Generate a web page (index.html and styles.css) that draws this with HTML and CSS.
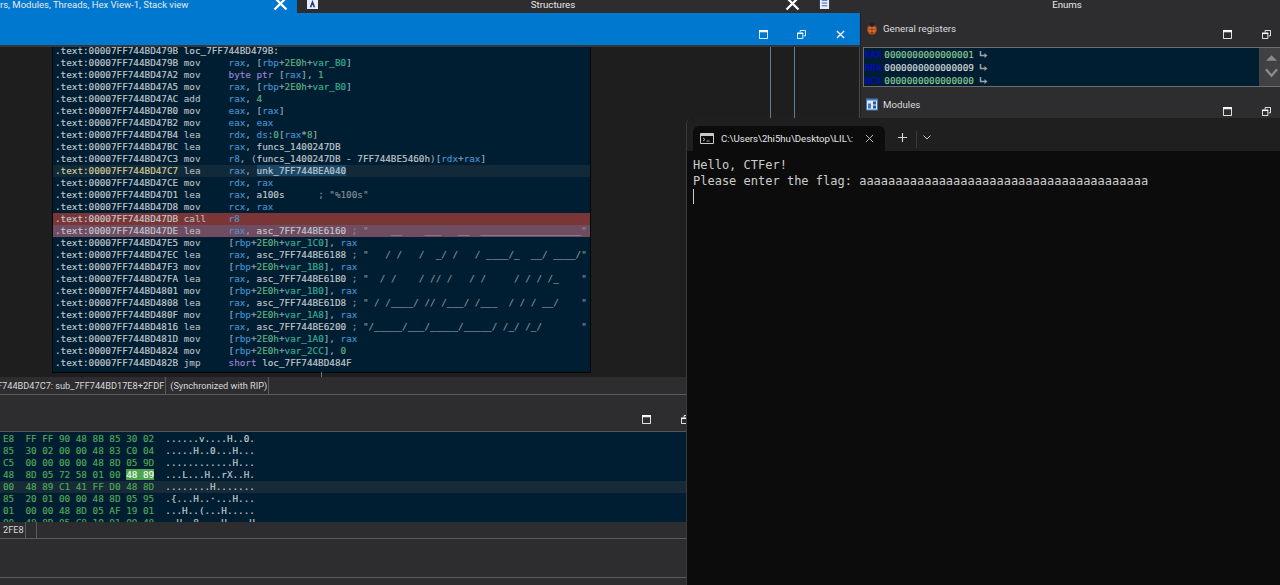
FILE: index.html
```html
<!DOCTYPE html>
<html lang="en">
<head>
    <meta charset="UTF-8">
    <title>IDA debugger and console</title>
    <link rel="stylesheet" href="styles.css">
</head>
<body>

    <svg class="defs" width="0" height="0">
        <symbol id="ic-max" viewBox="0 0 10 10"><path d="M.5.5h9v9h-9z M.5 2h9" fill="none" stroke="#fff" stroke-width="1"/><path d="M0 0h10v2H0z" fill="#fff"/></symbol>
        <symbol id="ic-restore" viewBox="0 0 10 10"><path d="M3.5 2.5v-2h6v6h-2" fill="none" stroke="#fff"/><path d="M.5 3.5h6v6h-6z" fill="none" stroke="#fff"/><path d="M0 3h7v1.5H0z" fill="#fff"/></symbol>
        <symbol id="ic-close" viewBox="0 0 10 10"><path d="M1 1l8 8M9 1l-8 8" fill="none" stroke="#fff" stroke-width="1.5"/></symbol>
        <symbol id="ic-bug" viewBox="0 0 12 13">
            <path d="M1 4L3 5M11 4L9 5M0 7h2M12 7h-2M1 11l2-1M11 11l-2-1" stroke="#3a2a20" fill="none"/>
            <ellipse cx="6" cy="7.5" rx="4.8" ry="5.2" fill="#b8521f"/>
            <path d="M6 3v9.5" stroke="#4a2410"/>
            <path d="M3 6h6M2.500 9h7" stroke="#d98a3c"/>
            <ellipse cx="6" cy="2.5" rx="3" ry="2" fill="#2c2320"/>
        </symbol>
        <symbol id="ic-arrow" viewBox="0 0 9 8">
            <path d="M1.500 0v4.500H6" fill="none" stroke="#9a9fa2" stroke-width="1.500"/>
            <path d="M5.500 2l3 2.500-3 2.500z" fill="#9a9fa2"/>
        </symbol>
    </svg>

    <div class="tabs">
        <div class="tab tab-active">
            <span class="tab-title">rs, Modules, Threads, Hex View-1, Stack view</span>
            <svg class="tab-x"><use href="#ic-close"/></svg>
        </div>
        <div class="tab tab-dark">
            <svg class="tab-icon" viewBox="0 0 12 12"><path d="M0 0h12v12H0z" fill="#e8eef8"/><path d="M6 2L3 10h2l.5-2h1l.5 2h2z" fill="#1f3f8f"/></svg>
            <span class="tab-label">Structures</span>
            <svg class="tab-x"><use href="#ic-close"/></svg>
        </div>
        <div class="tab tab-dark">
            <svg class="tab-icon" viewBox="0 0 12 12"><path d="M1 0h10v12H1z" fill="#e8eef8"/><path d="M3 2.500h6M3 5.500h6M3 8.500h6" stroke="#2a56a8"/></svg>
            <span class="tab-label">Enums</span>
            <span></span>
        </div>
    </div>

    <div class="workspace">
        <div class="left">
            <div class="blue-bar">
                <div class="win-btns">
                    <svg><use href="#ic-max"/></svg>
                    <svg><use href="#ic-restore"/></svg>
                    <svg><use href="#ic-close"/></svg>
                </div>
            </div>

            <div class="graph">
                <div class="edge edge-a"></div>
                <div class="edge edge-b"></div>
                <div class="edge edge-c"></div>
                <div class="node">
<div class="row"><i class="a">.text:00007FF744BD479B</i> <i class="s">loc_7FF744BD479B:</i></div>
<div class="row"><i class="a">.text:00007FF744BD479B</i> <i class="m">mov     </i><i class="r">rax</i><i class="p">, [</i><i class="r">rbp</i><i class="p">+</i><i class="n">2E0h</i><i class="p">+</i><i class="v">var_B0</i><i class="p">]</i></div>
<div class="row"><i class="a">.text:00007FF744BD47A2</i> <i class="m">mov     </i><i class="k">byte ptr</i><i class="p"> [</i><i class="r">rax</i><i class="p">], </i><i class="n">1</i></div>
<div class="row"><i class="a">.text:00007FF744BD47A5</i> <i class="m">mov     </i><i class="r">rax</i><i class="p">, [</i><i class="r">rbp</i><i class="p">+</i><i class="n">2E0h</i><i class="p">+</i><i class="v">var_B0</i><i class="p">]</i></div>
<div class="row"><i class="a">.text:00007FF744BD47AC</i> <i class="m">add     </i><i class="r">rax</i><i class="p">, </i><i class="n">4</i></div>
<div class="row"><i class="a">.text:00007FF744BD47B0</i> <i class="m">mov     </i><i class="r">eax</i><i class="p">, [</i><i class="r">rax</i><i class="p">]</i></div>
<div class="row"><i class="a">.text:00007FF744BD47B2</i> <i class="m">mov     </i><i class="r">eax</i><i class="p">, </i><i class="r">eax</i></div>
<div class="row"><i class="a">.text:00007FF744BD47B4</i> <i class="m">lea     </i><i class="r">rdx</i><i class="p">, </i><i class="r">ds</i><i class="p">:</i><i class="n">0</i><i class="p">[</i><i class="r">rax</i><i class="p">*</i><i class="n">8</i><i class="p">]</i></div>
<div class="row"><i class="a">.text:00007FF744BD47BC</i> <i class="m">lea     </i><i class="r">rax</i><i class="p">, </i><i class="s">funcs_1400247DB</i></div>
<div class="row"><i class="a">.text:00007FF744BD47C3</i> <i class="m">mov     </i><i class="r">r8</i><i class="p">, (</i><i class="s">funcs_1400247DB - 7FF744BE5460h</i><i class="p">)[</i><i class="r">rdx</i><i class="p">+</i><i class="r">rax</i><i class="p">]</i></div>
<div class="row row-cur"><i class="a a-cur">.text:00007FF744BD47C7</i> <i class="m">lea     </i><i class="r">rax</i><i class="p">, </i><i class="s sel">unk_7FF744BEA040</i></div>
<div class="row"><i class="a">.text:00007FF744BD47CE</i> <i class="m">mov     </i><i class="r">rdx</i><i class="p">, </i><i class="r">rax</i></div>
<div class="row"><i class="a">.text:00007FF744BD47D1</i> <i class="m">lea     </i><i class="r">rax</i><i class="p">, </i><i class="s">a100s</i>      <i class="c">; "%100s"</i></div>
<div class="row"><i class="a">.text:00007FF744BD47D8</i> <i class="m">mov     </i><i class="r">rcx</i><i class="p">, </i><i class="r">rax</i></div>
<div class="row row-bp"><i class="a">.text:00007FF744BD47DB</i> <i class="m">call    </i><i class="r">r8</i></div>
<div class="row row-next"><i class="a">.text:00007FF744BD47DE</i> <i class="m">lea     </i><i class="r">rax</i><i class="p">, </i><i class="s">asc_7FF744BE6160</i> <i class="c">; "    __    ___   __  __________________"</i></div>
<div class="row"><i class="a">.text:00007FF744BD47E5</i> <i class="m">mov     </i><i class="p">[</i><i class="r">rbp</i><i class="p">+</i><i class="n">2E0h</i><i class="p">+</i><i class="v">var_1C0</i><i class="p">], </i><i class="r">rax</i></div>
<div class="row"><i class="a">.text:00007FF744BD47EC</i> <i class="m">lea     </i><i class="r">rax</i><i class="p">, </i><i class="s">asc_7FF744BE6188</i> <i class="c">; "   / /   /  _/ /   / ____/_  __/ ____/"</i></div>
<div class="row"><i class="a">.text:00007FF744BD47F3</i> <i class="m">mov     </i><i class="p">[</i><i class="r">rbp</i><i class="p">+</i><i class="n">2E0h</i><i class="p">+</i><i class="v">var_1B8</i><i class="p">], </i><i class="r">rax</i></div>
<div class="row"><i class="a">.text:00007FF744BD47FA</i> <i class="m">lea     </i><i class="r">rax</i><i class="p">, </i><i class="s">asc_7FF744BE61B0</i> <i class="c">; "  / /    / // /   / /     / / / /_    "</i></div>
<div class="row"><i class="a">.text:00007FF744BD4801</i> <i class="m">mov     </i><i class="p">[</i><i class="r">rbp</i><i class="p">+</i><i class="n">2E0h</i><i class="p">+</i><i class="v">var_1B0</i><i class="p">], </i><i class="r">rax</i></div>
<div class="row"><i class="a">.text:00007FF744BD4808</i> <i class="m">lea     </i><i class="r">rax</i><i class="p">, </i><i class="s">asc_7FF744BE61D8</i> <i class="c">; " / /____/ // /___/ /___  / / / __/    "</i></div>
<div class="row"><i class="a">.text:00007FF744BD480F</i> <i class="m">mov     </i><i class="p">[</i><i class="r">rbp</i><i class="p">+</i><i class="n">2E0h</i><i class="p">+</i><i class="v">var_1A8</i><i class="p">], </i><i class="r">rax</i></div>
<div class="row"><i class="a">.text:00007FF744BD4816</i> <i class="m">lea     </i><i class="r">rax</i><i class="p">, </i><i class="s">asc_7FF744BE6200</i> <i class="c">; "/_____/___/_____/_____/ /_/ /_/       "</i></div>
<div class="row"><i class="a">.text:00007FF744BD481D</i> <i class="m">mov     </i><i class="p">[</i><i class="r">rbp</i><i class="p">+</i><i class="n">2E0h</i><i class="p">+</i><i class="v">var_1A0</i><i class="p">], </i><i class="r">rax</i></div>
<div class="row"><i class="a">.text:00007FF744BD4824</i> <i class="m">mov     </i><i class="p">[</i><i class="r">rbp</i><i class="p">+</i><i class="n">2E0h</i><i class="p">+</i><i class="v">var_2CC</i><i class="p">], </i><i class="n">0</i></div>
<div class="row"><i class="a">.text:00007FF744BD482B</i> <i class="m">jmp     </i><i class="k">short</i> <i class="s">loc_7FF744BD484F</i></div>
                </div>
            </div>

            <div class="status status-top">
                <span class="status-cell">F744BD47C7: sub_7FF744BD17E8+2FDF</span>
                <span class="status-cell">(Synchronized with RIP)</span>
            </div>

            <div class="hex-title">
                <div class="win-btns win-btns-hex">
                    <svg><use href="#ic-max"/></svg>
                    <svg><use href="#ic-restore"/></svg>
                </div>
            </div>

            <div class="hex">
<div class="hex-row">E8  FF FF 90 48 8B 85 30 02  <b>......v....H..0.</b></div>
<div class="hex-row">85  30 02 00 00 48 83 C0 04  <b>.....H..0...H...</b></div>
<div class="hex-row">C5  00 00 00 00 48 8D 05 9D  <b>............H...</b></div>
<div class="hex-row">48  8D 05 72 58 01 00 <em>48 89</em>  <b>...L...H..rX..H.</b></div>
<div class="hex-row hex-cur">00  48 89 C1 41 FF D0 48 8D  <b>........H.......</b></div>
<div class="hex-row">85  20 01 00 00 48 8D 05 95  <b>.{...H..·...H...</b></div>
<div class="hex-row">01  00 00 48 8D 05 AF 19 01  <b>...H..(...H.....</b></div>
<div class="hex-row">00  48 8D 05 C8 19 01 00 48  <b>..H..8....H....H</b></div>
            </div>

            <div class="status status-hex">
                <span class="status-cell">2FE8</span>
                <span class="status-cell status-empty"></span>
            </div>
            <div class="empty-panel"></div>
        </div>

        <div class="right">
            <div class="pane-head">
                <svg class="pane-icon"><use href="#ic-bug"/></svg>
                <span class="pane-title">General registers</span>
                <div class="win-btns win-btns-side">
                    <svg><use href="#ic-max"/></svg>
                    <svg><use href="#ic-restore"/></svg>
                </div>
            </div>
            <div class="regs">
                <div class="reg-list">
                    <div class="reg"><span class="reg-name">RAX</span><span class="reg-val reg-chg">0000000000000001</span><svg class="reg-arrow"><use href="#ic-arrow"/></svg></div>
                    <div class="reg"><span class="reg-name">RBX</span><span class="reg-val">0000000000000009</span><svg class="reg-arrow"><use href="#ic-arrow"/></svg></div>
                    <div class="reg"><span class="reg-name">RCX</span><span class="reg-val reg-chg">0000000000000000</span><svg class="reg-arrow"><use href="#ic-arrow"/></svg></div>
                </div>
                <div class="reg-scroll">
                    <svg viewBox="0 0 14 6"><path d="M1 6L7 0l6 6z" fill="#8a8a8a"/></svg>
                    <svg class="reg-down" viewBox="0 0 14 10"><path d="M1 1l6 7 6-7" fill="none" stroke="#8a8a8a" stroke-width="2.500"/></svg>
                </div>
            </div>
            <div class="pane-head pane-head-mod">
                <svg class="pane-icon" viewBox="0 0 12 12"><path d="M0 0h12v12H0z" fill="#3f78c8"/><path d="M1 2h10v9H1z" fill="#dfe9f6"/><path d="M2 5h3v5H2z" fill="#3f78c8"/><path d="M7 3h3v3H7zM7 7h3v3H7z" fill="#2a56a8"/></svg>
                <span class="pane-title">Modules</span>
                <div class="win-btns win-btns-side">
                    <svg><use href="#ic-max"/></svg>
                    <svg><use href="#ic-restore"/></svg>
                </div>
            </div>
        </div>
    </div>

    <!-- console window sits on top of the debugger -->
    <div class="term">
        <div class="term-bar">
            <div class="term-tab">
                <svg class="term-icon" viewBox="0 0 14 11"><path d="M.5.5h13v10H.5z" fill="none" stroke="#c8c8c8"/><path d="M1 1h12v2H1z" fill="#c8c8c8"/><path d="M3 5l2 1.500-2 1.500M6.500 8h3" fill="none" stroke="#c8c8c8" stroke-width=".8"/></svg>
                <span class="term-title">C:\Users\2hi5hu\Desktop\LIL\:</span>
                <svg class="term-x" viewBox="0 0 10 10"><path d="M1 1l8 8M9 1l-8 8" fill="none" stroke="#d0d0d0"/></svg>
            </div>
            <svg class="term-plus" viewBox="0 0 12 12"><path d="M6 1v10M1 6h10" fill="none" stroke="#d8d8d8" stroke-width="1.200"/></svg>
            <div class="term-sep"></div>
            <svg class="term-chev" viewBox="0 0 8 5"><path d="M.5.5L4 4 7.500.5" fill="none" stroke="#c8c8c8"/></svg>
        </div>
        <div class="term-body">
            <div class="term-line">Hello, CTFer!</div>
            <div class="term-line">Please enter the flag: aaaaaaaaaaaaaaaaaaaaaaaaaaaaaaaaaaaaaaaa</div>
            <div class="cursor"></div>
        </div>
    </div>

</body>
</html>
```

FILE: styles.css
```css
body {
    margin: 0;
    width: 1280px;
    height: 585px;
    overflow: hidden;
    position: relative;
    background-color: #2d2d2f;
    color: #d8d8d8;
    font-family: Roboto, "Noto Sans", sans-serif;
    font-size: 9.7px;
}
.defs {
    position: absolute;
}
i, em, b {
    font-style: normal;
    font-weight: normal;
}

/* top tab strip */
.tabs {
    display: flex;
    height: 13px;
    overflow: hidden;
    width: 1325px;
}
.tab {
    display: grid;
    grid-template-columns: 1fr auto 1fr;
    grid-template-rows: 13px;
    align-items: center;
    height: 13px;
    color: #e8e8e8;
    line-height: 9px;
}
.tab-active {
    width: 297px;
    display: flex;
    justify-content: space-between;
    background-color: #0078d0;
    font-size: 9.5px;
}
.tab-title {
    margin-top: -4px;
    white-space: nowrap;
}
.tab-dark {
    width: 512px;
    background-color: #2d2d2f;
}
.tab-dark:last-child {
    width: 516px;
}
.tab-label {
    margin-top: -4px;
}
.tab-icon {
    width: 11px;
    height: 11px;
    margin: -7px 0 0 10px;
}
.tab-x {
    width: 15px;
    height: 15px;
    margin: -7px 9px 0 0;
    justify-self: end;
}

.workspace {
    display: flex;
    height: 572px;
}
.left {
    width: 860px;
    flex-shrink: 0;
}
.right {
    flex: 1;
    border-left: 1px solid #1e1e1e;
}

/* window buttons */
.win-btns {
    display: flex;
    gap: 29.5px;
    margin-left: auto;
}
.win-btns svg {
    width: 9px;
    height: 9px;
    display: block;
}
.blue-bar {
    height: 32px;
    background-color: #0078d0;
    border-bottom: 2px solid #33363a;
    display: flex;
    align-items: flex-end;
    padding-right: 15.5px;
}
.blue-bar .win-btns {
    margin-bottom: 6.5px;
}

/* graph view */
.graph {
    height: 330px;
    position: relative;
    overflow: hidden;
    background-color: #1e1e1e;
    box-sizing: border-box;
    border-right: 1px solid #4a4a4a;
}
.edge {
    position: absolute;
    width: 1px;
    background-color: #5b7f98;
}
.edge-a {
    left: 770px;
    top: 0;
    height: 100%;
}
.edge-b {
    left: 794px;
    top: 0;
    height: 100%;
}
.edge-c {
    left: 321px;
    top: 325px;
    height: 5px;
}
.node {
    margin: -2px 0 0 53px;
    width: 537px;
    height: 327px;
    background-color: #001e32;
    box-shadow: 0 0 0 1px #050505;
    font-family: "DejaVu Sans Mono", monospace;
    font-size: 9.3px;
    line-height: 12px;
    -webkit-text-stroke: 0.15px;
}
.row {
    height: 12px;
    padding-left: 2px;
    white-space: pre;
    overflow: hidden;
}
.row-cur {
    background-color: #12293a;
}
.row-bp {
    background-color: #7a3636;
}
.row-next {
    background-color: #704c62;
}
.sel {
    background-color: #1c4868;
}
.a { color: #c0c7cb; }
.a-cur { color: #d4cb95; }
.m { color: #b0b8bc; }
.r { color: #4590ca; }
.p { color: #93aabd; }
.n { color: #5fb582; }
.v { color: #33b295; }
.k { color: #9f82d2; }
.s { color: #c0c7cb; }
.c { color: #858f95; }
.row-bp .r, .row-next .r { color: #4a93cc; }

/* status bars */
.status {
    display: flex;
    height: 17px;
    line-height: 17px;
    font-size: 9.2px;
    color: #d8d8d8;
    box-sizing: border-box;
}
.status-top {
    height: 18px;
    border-bottom: 1px solid #5c5c5c;
}
.status-top .status-cell:first-child {
    margin-left: -3px;
}
.status-cell {
    padding-right: 1px;
    margin-right: 4px;
    border-right: 1px solid #5c5c5c;
    white-space: nowrap;
}
.status-empty {
    width: 0;
    margin-left: 5px;
}
.status-hex {
    height: 17px;
    border-bottom: 1px solid #5c5c5c;
    line-height: 15px;
}
.status-hex .status-cell:first-child {
    margin-left: 3px;
}

.hex-title {
    height: 37px;
    box-sizing: border-box;
    border-bottom: 1px solid #565656;
    display: flex;
    align-items: flex-end;
    padding: 0 170.5px 7.5px 0;
}
.hex {
    height: 90px;
    overflow: hidden;
    background-color: #001e32;
    font-family: "DejaVu Sans Mono", monospace;
    font-size: 9.3px;
    line-height: 12px;
    padding-left: 3px;
    color: #52a856;
    -webkit-text-stroke: 0.15px;
}
.hex-row {
    height: 12px;
    margin-left: -3px;
    padding-left: 3px;
    white-space: pre;
}
.hex-row:first-child {
    margin-top: 1px;
}
.hex-row b {
    color: #c0cacc;
}
.hex-row em {
    background-color: #4ea44e;
    color: #eef8ee;
}
.hex-cur {
    background-color: #162a38;
}
.empty-panel {
    height: 38px;
    border-bottom: 1px solid #5c5c5c;
}

/* right side panes */
.pane-head {
    display: flex;
    align-items: center;
    height: 34px;
    padding-left: 5px;
    padding-right: 9.5px;
}
.pane-icon {
    width: 12px;
    height: 13px;
    margin: -3px 5px 0 0;
}
.pane-title {
    color: #dcdcdc;
    margin-top: -3px;
}
.win-btns-side {
    margin-top: 8px;
}
.pane-head-mod {
    height: 38px;
}
.pane-head-mod .win-btns-side {
    margin-top: 10px;
}
.regs {
    display: flex;
    height: 40px;
    margin-left: 2px;
    box-sizing: border-box;
    border: 1px solid #6e6e6e;
    border-right: 0;
}
.reg-list {
    width: 395px;
    background-color: #001e32;
    padding-top: 1px;
    overflow: hidden;
    font-family: "DejaVu Sans Mono", monospace;
    font-size: 9.3px;
    line-height: 12.8px;
    color: #d6dcdc;
    -webkit-text-stroke: 0.15px;
}
.reg {
    white-space: pre;
    padding-left: 1px;
}
.reg-name {
    color: #0606d8;
}
.reg-val {
    margin-left: 2.5px;
}
.reg-chg {
    color: #8ccc92;
}
.reg-arrow {
    width: 9px;
    height: 8px;
    margin-left: 5px;
    vertical-align: -1px;
}
.reg-scroll {
    flex: 1;
    background-color: #414143;
    display: flex;
    flex-direction: column;
    align-items: center;
    gap: 7px;
    padding: 7px 0 0 4px;
}
.reg-scroll svg {
    width: 13px;
    height: 6px;
}
.reg-scroll .reg-down {
    height: 10px;
}

/* console */
.term {
    position: absolute;
    left: 686px;
    top: 118px;
    right: 0;
    bottom: 0;
    background-color: #0c0c0c;
    border-left: 1px solid #3c3c3c;
    border-top-left-radius: 6px;
}
.term-bar {
    display: flex;
    align-items: flex-end;
    height: 33px;
    background-color: #1f1f1f;
    border-top-left-radius: 6px;
    box-sizing: border-box;
    padding-left: 6px;
}
.term-tab {
    display: flex;
    align-items: center;
    width: 192px;
    height: 25px;
    box-sizing: border-box;
    padding: 0 11px 0 7px;
    background-color: #0c0c0c;
    border-radius: 6px 6px 0 0;
    font-size: 9.6px;
    color: #e4e4e4;
}
.term-icon {
    width: 14px;
    height: 11px;
    flex-shrink: 0;
}
.term-title {
    margin-left: 7px;
    width: 133px;
    overflow: hidden;
    white-space: nowrap;
}
.term-x {
    width: 9px;
    height: 9px;
    margin-left: auto;
}
.term-plus {
    width: 11px;
    height: 11px;
    margin: 0 0 8px 12px;
}
.term-sep {
    width: 1px;
    height: 17px;
    margin: 0 0 3px 8px;
    background-color: #3a3a3a;
}
.term-chev {
    width: 8px;
    height: 5px;
    margin: 0 0 11px 6px;
}
.term-body {
    padding: 6px 0 0 6px;
    font-family: "DejaVu Sans Mono", monospace;
    font-size: 12px;
    line-height: 16px;
    color: #cccccc;
}
.term-line {
    white-space: pre;
}
.cursor {
    width: 1px;
    height: 15px;
    background-color: #cccccc;
}
```
